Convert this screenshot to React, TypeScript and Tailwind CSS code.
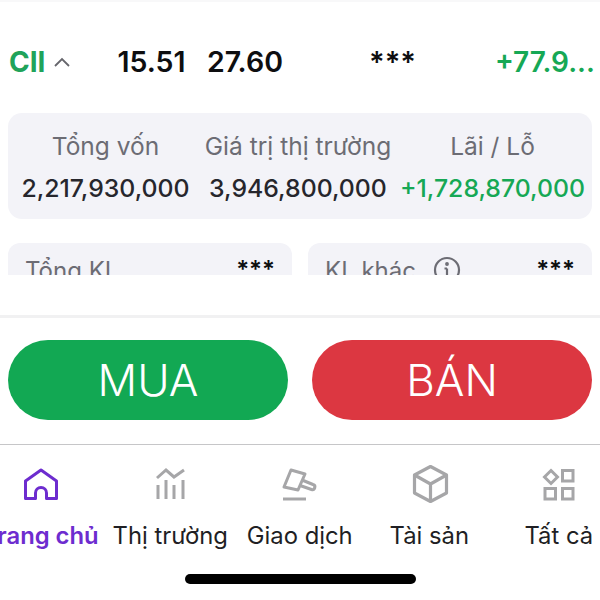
import React from "react";

const font = { fontFamily: '"Inter", "Noto Sans", sans-serif' };

function Stat({ label, value, green, w }: { label: string; value: string; green?: boolean; w: string }) {
  return (
    <div className={`flex flex-col items-center shrink-0 ${w}`}>
      <span className="text-[24.5px] leading-[30px] text-[#6c6c74] whitespace-nowrap">{label}</span>
      <span className={`mt-[12px] text-[24.8px] leading-[30px] font-medium whitespace-nowrap ${green ? "text-[#16a855]" : "text-[#26262c]"}`}>{value}</span>
    </div>
  );
}

function Tab({ label, active, children }: { label: string; active?: boolean; children: React.ReactNode }) {
  return (
    <div className="flex flex-col items-center w-[129.5px] shrink-0">
      <div className="h-[44px] w-[44px] flex items-center justify-center">{children}</div>
      <span className={`mt-[13px] text-[23.8px] leading-[30px] whitespace-nowrap ${active ? "font-semibold text-[#6d2ccf]" : "text-[#1f1f24]"}`}>{label}</span>
    </div>
  );
}

export default function App() {
  return (
    <div style={font} className="w-[600px] h-[600px] overflow-hidden bg-white flex flex-col">
      <div className="h-[2px] bg-[#f8f8f9] shrink-0" />
      <div className="h-[273px] overflow-hidden shrink-0">
        <div className="mt-[43px] h-[34px] flex items-center pl-[9px] text-[#0e0e10]">
          <span className="w-[37px] text-[28px] font-bold text-[#20a35a]">CII</span>
          <svg width="18" height="12" viewBox="0 0 18 12" fill="none" stroke="#66666c" strokeWidth="1.8" className="ml-[7px] shrink-0">
            <path d="M2 10 L9 3 L16 10" />
          </svg>
          <span className="ml-[45px] w-[71px] text-[28.5px] font-semibold text-center">15.51</span>
          <span className="ml-[20px] w-[73px] text-[28.5px] font-semibold text-center">27.60</span>
          <span className="ml-[89px] w-[46px] text-[29px] font-semibold text-center">***</span>
          <span className="ml-[80px] text-[28px] font-semibold text-[#16a855] whitespace-nowrap">+77.9...</span>
        </div>
        <div className="mt-[34px] mx-[8px] h-[106px] rounded-[14px] bg-[#f3f3f8] flex items-start pt-[18px]">
          <div className="flex ml-[10px]">
            <Stat label="Tổng vốn" value="2,217,930,000" w="w-[175px]" />
            <Stat label="Giá trị thị trường" value="3,946,800,000" w="w-[190px] ml-[10px]" />
            <Stat label="Lãi / Lỗ" value="+1,728,870,000" green w="w-[185px] ml-[7px]" />
          </div>
        </div>
        <div className="mt-[24px] mx-[8px] flex gap-[16px]">
          <div className="w-[284px] h-[60px] rounded-[12px] bg-[#f3f3f8] flex justify-between pl-[17px] pr-[17px] pt-[13px] text-[24px] leading-[30px] text-[#6c6c74]">
            <span>Tổng KL</span>
            <span className="text-[#0e0e10] font-semibold -mt-[1px]">***</span>
          </div>
          <div className="w-[284px] h-[60px] rounded-[12px] bg-[#f3f3f8] flex items-start pl-[17px] pr-[17px] pt-[13px] text-[24px] leading-[30px] text-[#6c6c74]">
            <span>KL khác</span>
            <svg width="28" height="28" viewBox="0 0 28 28" fill="none" stroke="#6c6c74" strokeWidth="2.2" className="ml-[17px] shrink-0">
              <circle cx="14" cy="14" r="12" />
              <path d="M14 12.5 V20 M11.5 12.5 H14 M11.5 20 H16.5" />
              <circle cx="14" cy="8" r="0.8" fill="#6c6c74" />
            </svg>
            <span className="ml-auto text-[#0e0e10] font-semibold -mt-[1px]">***</span>
          </div>
        </div>
      </div>
      <div className="h-[130px] shrink-0 mt-[40px] border-t-[3px] border-[#f1f1f2] border-b border-b-[#c6c6c8] bg-white flex gap-[24px] px-[8px] pt-[22px]">
        <button className="w-[280px] h-[80px] rounded-[40px] bg-[#12a853] text-white text-[44px] font-light flex items-center justify-center">MUA</button>
        <button className="w-[280px] h-[80px] rounded-[40px] bg-[#dc3741] text-white text-[44px] font-light flex items-center justify-center">BÁN</button>
      </div>
      <div className="flex ml-[-24px] mt-[19px] shrink-0">
        <Tab label="Trang chủ" active>
          <svg width="44" height="44" viewBox="0 0 44 44" fill="none" stroke="#6d2ccf" strokeWidth="3" strokeLinejoin="round">
            <path d="M22 6 L6.5 17 V34.5 H16.5 V29 A5.5 5.5 0 0 1 27.5 29 V34.5 H37.5 V17 Z" />
          </svg>
        </Tab>
        <Tab label="Thị trường">
          <svg width="44" height="44" viewBox="0 0 44 44" fill="none" stroke="#a6a6a8" strokeWidth="3">
            <path d="M9 14 L18 6 L26 13 L36 6" />
            <path d="M10 21 V35 M18 16 V35 M26 21 V35 M35 16 V35" />
          </svg>
        </Tab>
        <Tab label="Giao dịch">
          <svg width="44" height="44" viewBox="0 0 44 44" fill="none" stroke="#a6a6a8" strokeWidth="3" strokeLinejoin="round">
            <path d="M13 6 L27 10 L20 26 L6 23 Z" />
            <path d="M24 16 L35 20.5 A2.6 2.6 0 0 1 33.5 25.5 L22 21.5" />
            <path d="M5 35 H28" />
          </svg>
        </Tab>
        <Tab label="Tài sản">
          <svg width="44" height="44" viewBox="0 0 44 44" fill="none" stroke="#a6a6a8" strokeWidth="3.2" strokeLinejoin="round">
            <path d="M23.5 2.5 L39.5 11 V29 L23.5 37.5 L7.5 29 V11 Z" />
            <path d="M7.5 11 L23.5 20 L39.5 11 M23.5 20 V37.5" />
          </svg>
        </Tab>
        <Tab label="Tất cả">
          <svg width="44" height="44" viewBox="0 0 44 44" fill="none" stroke="#a6a6a8" strokeWidth="3">
            <path d="M14 6.5 L20.5 13 L14 19.5 L7.5 13 Z" />
            <rect x="25.5" y="6.5" width="10.5" height="10.5" />
            <rect x="8" y="24.5" width="10.5" height="10.5" />
            <rect x="25.5" y="24.5" width="10.5" height="10.5" />
          </svg>
        </Tab>
      </div>
      <div className="mt-[23px] mx-auto w-[231px] h-[10px] rounded-full bg-black shrink-0" />
    </div>
  );
}
